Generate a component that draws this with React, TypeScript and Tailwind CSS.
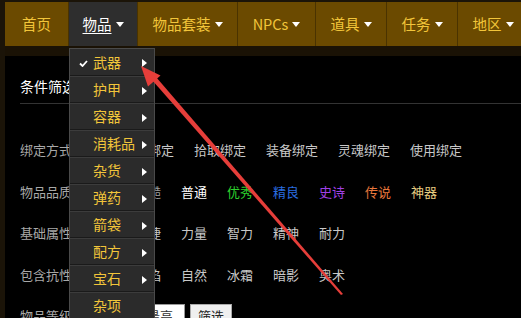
import React from 'react';

const font = { fontFamily: '"Noto Sans CJK SC", "Noto Sans", sans-serif' };

const navItems = [
  { label: '首页', w: 'w-[64px]', caret: false },
  { label: '物品', w: 'w-[69px]', caret: true, active: true },
  { label: '物品套装', w: 'w-[100px]', caret: true },
  { label: 'NPCs', w: 'w-[78px]', caret: true },
  { label: '道具', w: 'w-[71px]', caret: true },
  { label: '任务', w: 'w-[71px]', caret: true },
  { label: '地区', w: 'w-[71px]', caret: true },
];

const menuItems = ['武器', '护甲', '容器', '消耗品', '杂货', '弹药', '箭袋', '配方', '宝石', '杂项'];

const Caret = () => (
  <span className="ml-[4px] inline-block w-0 h-0 border-l-[4px] border-r-[4px] border-t-[5px] border-l-transparent border-r-transparent border-t-white" />
);

const Row: React.FC<{ label: string; children: React.ReactNode }> = ({ label, children }) => (
  <div className="flex items-center h-[41.5px] text-[13px]">
    <div className="w-[115px] text-[#a8a8a8]">{label}</div>
    <div className="flex items-center gap-[20px] text-[#c8c8c8]">{children}</div>
  </div>
);

const App: React.FC = () => {
  return (
    <div className="relative w-[521px] h-[318px] overflow-hidden bg-[#1b1408] pt-[2px] pl-[5px]" style={font}>
      {/* nav */}
      <div className="flex h-[44px] bg-[#6b4a00]">
        {navItems.map((n) => (
          <div
            key={n.label}
            className={`${n.w} shrink-0 flex items-center justify-center border-r border-[#4a3300] text-[14.5px] ${
              n.active ? 'bg-[#2e2e2e] text-white' : 'text-[#f2c53a]'
            }`}
          >
            <span className={n.active ? 'underline underline-offset-[3px]' : ''}>{n.label}</span>
            {n.caret && <Caret />}
          </div>
        ))}
      </div>
      <div className="h-[10px] bg-[#1a1205]" />

      {/* content */}
      <div className="bg-black h-[262px] pl-[15px] pt-[20px]">
        <div className="text-[14px] leading-[20px] text-white pb-[7px] border-b border-[#333]">条件筛选</div>
        <div className="pt-[25px]">
          <Row label="绑定方式：">
            <span>无绑定</span>
            <span>拾取绑定</span>
            <span>装备绑定</span>
            <span>灵魂绑定</span>
            <span>使用绑定</span>
          </Row>
          <Row label="物品品质：">
            <span className="text-[#9d9d9d]">粗糙</span>
            <span className="text-white">普通</span>
            <span className="text-[#2ed12e]">优秀</span>
            <span className="text-[#2a6ee0]">精良</span>
            <span className="text-[#a040e6]">史诗</span>
            <span className="text-[#e8783c]">传说</span>
            <span className="text-[#e6cc80]">神器</span>
          </Row>
          <Row label="基础属性：">
            <span>敏捷</span>
            <span>力量</span>
            <span>智力</span>
            <span>精神</span>
            <span>耐力</span>
          </Row>
          <Row label="包含抗性：">
            <span>火焰</span>
            <span>自然</span>
            <span>冰霜</span>
            <span>暗影</span>
            <span>奥术</span>
          </Row>
          <div className="flex items-center h-[41.5px] text-[13px]">
            <div className="w-[115px] text-[#a8a8a8]">物品等级：</div>
            <div className="w-[50px] h-[24px] bg-white border border-[#999] text-[#333] flex items-center justify-center">最高</div>
            <div className="ml-[5px] w-[42px] h-[24px] bg-[#efefef] border border-[#aaa] text-[#222] flex items-center justify-center">筛选</div>
          </div>
        </div>
      </div>

      {/* dropdown */}
      <div className="absolute left-[69px] top-[48px] w-[86px] bg-[#2b2b2b] border border-[#4a4a4a]">
        {menuItems.map((m, i) => (
          <div
            key={m}
            className="relative h-[27px] flex items-center pl-[23px] text-[14px] text-[#f2c53a] border-t border-[#3c3c3c] border-b border-b-[#1a1a1a] first:border-t-0"
          >
            {i === 0 && (
              <svg className="absolute left-[9px] top-[11px]" width="9" height="7" viewBox="0 0 9 7">
                <polyline points="1,3.5 3.5,6 8,1" fill="none" stroke="white" strokeWidth="1.8" />
              </svg>
            )}
            <span>{m}</span>
            {i < 9 && (
              <span className="absolute left-[72px] top-[10px] w-0 h-0 border-t-[4px] border-b-[4px] border-l-[5px] border-t-transparent border-b-transparent border-l-white" />
            )}
          </div>
        ))}
      </div>

      {/* red arrow */}
      <svg className="absolute left-0 top-0 pointer-events-none" width="521" height="318" viewBox="0 0 521 318">
        <polygon points="343,294 341,295 152,80 156,77" fill="#e63e3a" />
        <polygon points="141,66 160.5,75.5 148,86.5" fill="#e63e3a" />
      </svg>
    </div>
  );
};

export default App;
